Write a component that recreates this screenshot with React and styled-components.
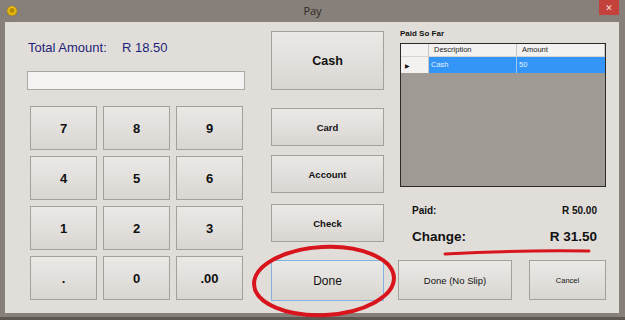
import React from 'react'
import styled, { createGlobalStyle } from 'styled-components';

const Global = createGlobalStyle`
  html, body {
    margin: 0;
    padding: 0;
    width: 625px;
    height: 320px;
    overflow: hidden;
    background: #857d77;
  }
  * { box-sizing: border-box; }
`;

const Window = styled.div`
  position: relative;
  width: 625px;
  height: 320px;
  background: #877f79;
  display: flex;
  flex-direction: column;
  font-family: "Liberation Sans", Arial, sans-serif;
  border-bottom: 3px solid #5d5752;
`;

const TitleBar = styled.div`
  height: 22px;
  display: grid;
  grid-template-columns: 1fr auto 1fr;
  align-items: center;
`;

const Coin = styled.div`
  margin-left: 7px;
  width: 10px;
  height: 10px;
  border-radius: 50%;
  background: radial-gradient(circle at 50% 45%, #b88a00 0 2px, #e9c21d 3px, #c99a05 5px);
  box-shadow: 0 0 1px #7a5d00;
`;

const Title = styled.div`
  font-family: "Open Sans", "Noto Sans", sans-serif;
  font-size: 11px;
  color: #2c2a28;
  padding-bottom: 1px;
`;

const Close = styled.div`
  justify-self: end;
  align-self: start;
  margin-right: 6px;
  width: 20px;
  height: 15px;
  background: #c4403a;
  color: #f4dcd9;
  font-family: "DejaVu Sans", sans-serif;
  font-size: 9px;
  display: flex;
  align-items: center;
  justify-content: center;
`;

const Client = styled.div`
  margin: 0 6px 0 5px;
  height: 291px;
  background: #e1deda;
  display: flex;
`;

const LeftCol = styled.div`
  margin-left: 22px;
  width: 221px;
  display: flex;
  flex-direction: column;
`;

const TotalRow = styled.div`
  margin-top: 18px;
  height: 16px;
  line-height: 16px;
  display: flex;
  color: #1e1f78;
  font-size: 13px;
  padding-left: 1px;
`;

const TotalLabel = styled.span`
  width: 94px;
`;

const AmountInput = styled.div`
  margin-top: 15px;
  width: 218px;
  height: 19px;
  background: #f4f3f1;
  border: 1px solid #aaa7a3;
`;

const Keypad = styled.div`
  margin-top: 16px;
  margin-left: 3px;
  display: grid;
  grid-template-columns: repeat(3, 67px);
  grid-auto-rows: 44px;
  column-gap: 6px;
  row-gap: 6px;
`;

const Button = styled.div`
  display: flex;
  align-items: center;
  justify-content: center;
  background: linear-gradient(#ebe9e6, #d9d6d2);
  border: 1px solid ${p => (p.$focus ? '#83b2e0' : '#a4a19d')};
  color: #111;
  font-size: ${p => p.$size || 12}px;
  font-weight: ${p => (p.$bold ? 'bold' : 'normal')};
  height: ${p => p.$h || 44}px;
  margin-top: ${p => p.$mt || 0}px;
  width: ${p => (p.$w ? p.$w + 'px' : 'auto')};
`;

const MidCol = styled.div`
  margin-left: 23px;
  width: 113px;
  display: flex;
  flex-direction: column;
`;

const RightCol = styled.div`
  margin-left: 14px;
  width: 208px;
  display: flex;
  flex-direction: column;
`;

const SectionLabel = styled.div`
  margin-top: 6px;
  padding-left: 2px;
  height: 12px;
  line-height: 12px;
  font-size: 8px;
  font-weight: bold;
  color: #111;
`;

const Grid = styled.div`
  margin-top: 3px;
  margin-left: 2px;
  width: 206px;
  height: 144px;
  border: 1px solid #2b2a29;
  background: #a09a95;
  display: grid;
  grid-template-columns: 28px 88px 1fr;
  grid-template-rows: 13px 16px;
  align-content: start;
  font-size: 7.5px;
`;

const HeadCell = styled.div`
  background: #f3f2f0;
  border-right: 1px solid #c9c7c4;
  border-bottom: 1px solid #d6d4d1;
  padding-left: 5px;
  line-height: 12px;
  color: #222;
`;

const RowHead = styled.div`
  background: #f3f2f0;
  border-right: 1px solid #c9c7c4;
  display: flex;
  align-items: center;
  padding-left: 4px;
  font-size: 6px;
  color: #111;
`;

const Cell = styled.div`
  background: #3395f5;
  color: #e4f1ff;
  line-height: 16px;
  padding-left: 2px;
  border-right: ${p => (p.$last ? 'none' : '1px solid #9cc7f2')};
`;

const SumRow = styled.div`
  margin-top: ${p => p.$mt}px;
  height: ${p => p.$h}px;
  line-height: ${p => p.$h}px;
  padding: 0 9px 0 14px;
  display: flex;
  justify-content: space-between;
  font-weight: bold;
  font-size: ${p => p.$size}px;
  color: #111;
`;

const BottomRow = styled.div`
  margin-top: 14px;
  display: flex;
  justify-content: space-between;
`;

const Marks = styled.svg`
  position: absolute;
  left: 0;
  top: 0;
  pointer-events: none;
`;

const keys = ['7', '8', '9', '4', '5', '6', '1', '2', '3', '.', '0', '.00'];

export default function App() {
  return (
    <Window>
      <Global />
      <TitleBar>
        <Coin />
        <Title>Pay</Title>
        <Close>✕</Close>
      </TitleBar>
      <Client>
        <LeftCol>
          <TotalRow>
            <TotalLabel>Total Amount:</TotalLabel>
            <span>R 18.50</span>
          </TotalRow>
          <AmountInput />
          <Keypad>
            {keys.map(k => (
              <Button key={k} $bold $size={13}>{k}</Button>
            ))}
          </Keypad>
        </LeftCol>
        <MidCol>
          <Button $bold $size={12.5} $h={59} $mt={9}>Cash</Button>
          <Button $bold $size={9.5} $h={38} $mt={18}>Card</Button>
          <Button $bold $size={9.5} $h={38} $mt={9}>Account</Button>
          <Button $bold $size={9.5} $h={38} $mt={11}>Check</Button>
          <Button $focus $size={12} $h={41} $mt={18}>Done</Button>
        </MidCol>
        <RightCol>
          <SectionLabel>Paid So Far</SectionLabel>
          <Grid>
            <HeadCell />
            <HeadCell>Description</HeadCell>
            <HeadCell>Amount</HeadCell>
            <RowHead>▶</RowHead>
            <Cell>Cash</Cell>
            <Cell $last>50</Cell>
          </Grid>
          <SumRow $mt={17} $h={14} $size={10}>
            <span>Paid:</span>
            <span>R 50.00</span>
          </SumRow>
          <SumRow $mt={10} $h={18} $size={13.5}>
            <span>Change:</span>
            <span>R 31.50</span>
          </SumRow>
          <BottomRow>
            <Button $size={9.5} $h={40} $w={114}>Done (No Slip)</Button>
            <Button $size={7.5} $h={40} $w={77}>Cancel</Button>
          </BottomRow>
        </RightCol>
      </Client>
      <Marks width="625" height="320" viewBox="0 0 625 320">
        <ellipse cx="324" cy="281" rx="70" ry="34" fill="none" stroke="#d8151c" strokeWidth="4" transform="rotate(-3 324 281)" />
        <path d="M445 254 Q 515 250 589 251" fill="none" stroke="#d8151c" strokeWidth="3" strokeLinecap="round" />
      </Marks>
    </Window>
  );
}
